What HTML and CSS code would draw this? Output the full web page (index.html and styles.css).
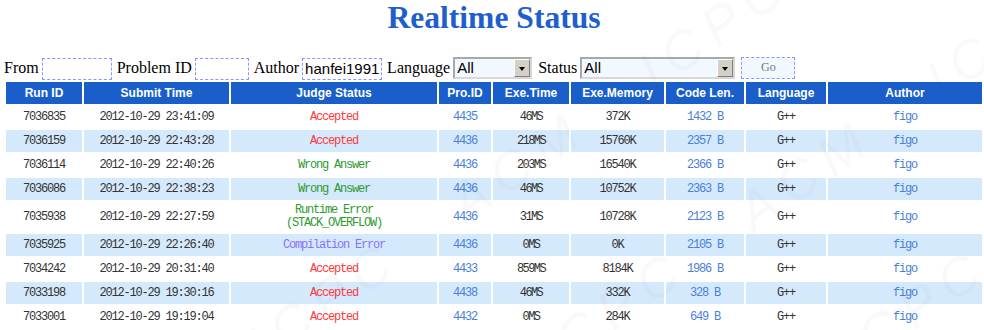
FILE: index.html
```html
<!DOCTYPE html>
<html lang="en">
<head>
  <meta charset="UTF-8">
  <title>Realtime Status</title>
  <link rel="stylesheet" href="styles.css">
</head>
<body>
  <div class="watermark" aria-hidden="true">
    <span>ICPC &nbsp; ACM &nbsp; ICPC &nbsp; ACM &nbsp; ICPC &nbsp; ACM &nbsp; ICPC</span>
    <span>ACM &nbsp; ICPC &nbsp; ACM &nbsp; ICPC &nbsp; ACM &nbsp; ICPC &nbsp; ACM</span>
    <span>ICPC &nbsp; ACM &nbsp; ICPC &nbsp; ACM &nbsp; ICPC &nbsp; ACM &nbsp; ICPC</span>
    <span>ACM &nbsp; ICPC &nbsp; ACM &nbsp; ICPC &nbsp; ACM &nbsp; ICPC &nbsp; ACM</span>
  </div>

  <h1 class="title">Realtime Status</h1>

  <form class="filter">
    <label>From</label>
    <input type="text" class="box box-from">
    <label>Problem ID</label>
    <input type="text" class="box box-pid">
    <label>Author</label>
    <input type="text" class="box box-author" value="hanfei19910">
    <label>Language</label>
    <span class="select select-lang">
      <select><option>All</option><option>G++</option><option>GCC</option><option>C++</option><option>C</option><option>Pascal</option><option>Java</option></select>
      <span class="arrow"></span>
    </span>
    <label>Status</label>
    <span class="select select-status">
      <select><option>All</option><option>Accepted</option><option>Wrong Answer</option><option>Runtime Error</option><option>Compilation Error</option></select>
      <span class="arrow"></span>
    </span>
    <button type="button" class="go">Go</button>
  </form>

  <table class="status">
    <colgroup>
      <col style="width:76px">
      <col style="width:145px">
      <col style="width:206px">
      <col style="width:52px">
      <col style="width:76px">
      <col style="width:93px">
      <col style="width:78px">
      <col style="width:80px">
      <col style="width:154px">
    </colgroup>
    <thead>
      <tr>
        <th>Run ID</th><th>Submit Time</th><th>Judge Status</th><th>Pro.ID</th><th>Exe.Time</th><th>Exe.Memory</th><th>Code Len.</th><th>Language</th><th>Author</th>
      </tr>
    </thead>
    <tbody>
      <tr>
        <td>7036835</td><td>2012-10-29 23:41:09</td><td class="ac">Accepted</td><td><a href="#">4435</a></td><td class="time">46MS</td><td>372K</td><td><a href="#">1432 B</a></td><td>G++</td><td><a href="#">figo</a></td>
      </tr>
      <tr>
        <td>7036159</td><td>2012-10-29 22:43:28</td><td class="ac">Accepted</td><td><a href="#">4436</a></td><td class="time">218MS</td><td>15760K</td><td><a href="#">2357 B</a></td><td>G++</td><td><a href="#">figo</a></td>
      </tr>
      <tr>
        <td>7036114</td><td>2012-10-29 22:40:26</td><td class="wa">Wrong Answer</td><td><a href="#">4436</a></td><td class="time">203MS</td><td>16540K</td><td><a href="#">2366 B</a></td><td>G++</td><td><a href="#">figo</a></td>
      </tr>
      <tr>
        <td>7036086</td><td>2012-10-29 22:38:23</td><td class="wa">Wrong Answer</td><td><a href="#">4436</a></td><td class="time">46MS</td><td>10752K</td><td><a href="#">2363 B</a></td><td>G++</td><td><a href="#">figo</a></td>
      </tr>
      <tr>
        <td>7035938</td><td>2012-10-29 22:27:59</td><td class="re">Runtime Error<br>(STACK_OVERFLOW)</td><td><a href="#">4436</a></td><td class="time">31MS</td><td>10728K</td><td><a href="#">2123 B</a></td><td>G++</td><td><a href="#">figo</a></td>
      </tr>
      <tr>
        <td>7035925</td><td>2012-10-29 22:26:40</td><td class="ce">Compilation Error</td><td><a href="#">4436</a></td><td class="time">0MS</td><td>0K</td><td><a href="#">2105 B</a></td><td>G++</td><td><a href="#">figo</a></td>
      </tr>
      <tr>
        <td>7034242</td><td>2012-10-29 20:31:40</td><td class="ac">Accepted</td><td><a href="#">4433</a></td><td class="time">859MS</td><td>8184K</td><td><a href="#">1986 B</a></td><td>G++</td><td><a href="#">figo</a></td>
      </tr>
      <tr>
        <td>7033198</td><td>2012-10-29 19:30:16</td><td class="ac">Accepted</td><td><a href="#">4438</a></td><td class="time">46MS</td><td>332K</td><td><a href="#">328 B</a></td><td>G++</td><td><a href="#">figo</a></td>
      </tr>
      <tr>
        <td>7033001</td><td>2012-10-29 19:19:04</td><td class="ac">Accepted</td><td><a href="#">4432</a></td><td class="time">0MS</td><td>284K</td><td><a href="#">649 B</a></td><td>G++</td><td><a href="#">figo</a></td>
      </tr>
    </tbody>
  </table>
</body>
</html>
```

FILE: styles.css
```css
body {
  margin: 0;
  padding: 0 0 0 4px;
  background: #fff;
  font-family: 'Liberation Serif', 'Times New Roman', serif;
  color: #000;
  overflow: hidden;
}

.watermark {
  position: fixed;
  top: -120px;
  left: -200px;
  width: 1500px;
  transform: rotate(-35deg);
  transform-origin: center center;
  pointer-events: none;
  z-index: 5;
  display: flex;
  flex-direction: column;
  gap: 110px;
  padding-top: 260px;
}

.watermark span {
  font-family: 'Liberation Sans', Arial, sans-serif;
  font-style: italic;
  font-size: 54px;
  letter-spacing: 0.2em;
  color: rgba(0, 0, 0, 0.025);
  white-space: nowrap;
}

.title {
  margin: 0 0 20px;
  font-size: 31.6px;
  line-height: 36px;
  font-weight: bold;
  text-align: center;
  color: #1f5fcc;
}

.filter {
  display: flex;
  align-items: center;
  height: 24px;
  font-size: 16px;
}

.filter label {
  margin: 0 3px 0 0;
}

.box {
  box-sizing: border-box;
  height: 22px;
  margin: 1px 5px 0 0;
  padding: 0 2px;
  border: 1px dashed #8a96ff;
  background: #fff;
  font-family: 'Liberation Sans', Arial, sans-serif;
  font-size: 15px;
  outline: none;
}

.box-from { width: 70px; }
.box-pid { width: 54px; }
.box-author { width: 80px; }

.select {
  position: relative;
  display: inline-block;
  box-sizing: border-box;
  height: 22px;
  margin-right: 6px;
  margin-top: -1px;
  border: 2px solid #a9a9a9;
  border-right-color: #d8d8d8;
  border-bottom-color: #d8d8d8;
  background: #f2f8ff;
}

.select-lang { width: 79px; }
.select-status { width: 155px; }

.select select {
  appearance: none;
  -webkit-appearance: none;
  width: 100%;
  height: 18px;
  margin: 0;
  padding: 0 0 0 2px;
  border: none;
  background: transparent;
  font-family: 'Liberation Sans', Arial, sans-serif;
  font-size: 15px;
  line-height: 18px;
  color: #000;
  outline: none;
}

.select .arrow {
  position: absolute;
  top: 0;
  right: 0;
  width: 16px;
  height: 18px;
  box-sizing: border-box;
  background: #d4d0c8;
  border-left: 1px solid #fff;
  border-top: 1px solid #fff;
  border-right: 1px solid #808080;
  border-bottom: 1px solid #808080;
  pointer-events: none;
}

.select .arrow::after {
  content: '';
  position: absolute;
  left: 4px;
  top: 7px;
  border-left: 3.5px solid transparent;
  border-right: 3.5px solid transparent;
  border-top: 4px solid #000;
}

.go {
  box-sizing: border-box;
  width: 54px;
  height: 22px;
  margin-top: -1px;
  padding: 0;
  border: 1px dashed #8a96ff;
  background: #f2f8ff;
  font-family: 'Liberation Serif', 'Times New Roman', serif;
  font-size: 12px;
  color: #777;
  cursor: pointer;
}

.status {
  width: 980px;
  table-layout: fixed;
  border-collapse: separate;
  border-spacing: 2px;
  margin: 0;
  font-family: 'Liberation Mono', 'Courier New', monospace;
  font-size: 12px;
  letter-spacing: -1.2px;
  color: #333;
}

.status th {
  height: 22px;
  padding: 0;
  background: #1a5fc9;
  color: #fff;
  font-family: 'Liberation Sans', Arial, sans-serif;
  font-size: 12px;
  font-weight: bold;
  letter-spacing: 0;
  text-align: center;
  vertical-align: middle;
}

.status td {
  height: 22px;
  padding: 2px 0;
  box-sizing: border-box;
  line-height: 13px;
  text-align: center;
  vertical-align: middle;
  white-space: nowrap;
}

.status tbody tr:nth-child(even) td {
  background: #d5e9fd;
}

.status a {
  color: #4b80d8;
  text-decoration: none;
}

.status .ac { color: #ff3a3a; }
.status .wa { color: #2f9a2f; }
.status .re { color: #2f9a2f; }
.status .ce { color: #8a70ff; }

.status .time {
  letter-spacing: -1.6px;
}
```
